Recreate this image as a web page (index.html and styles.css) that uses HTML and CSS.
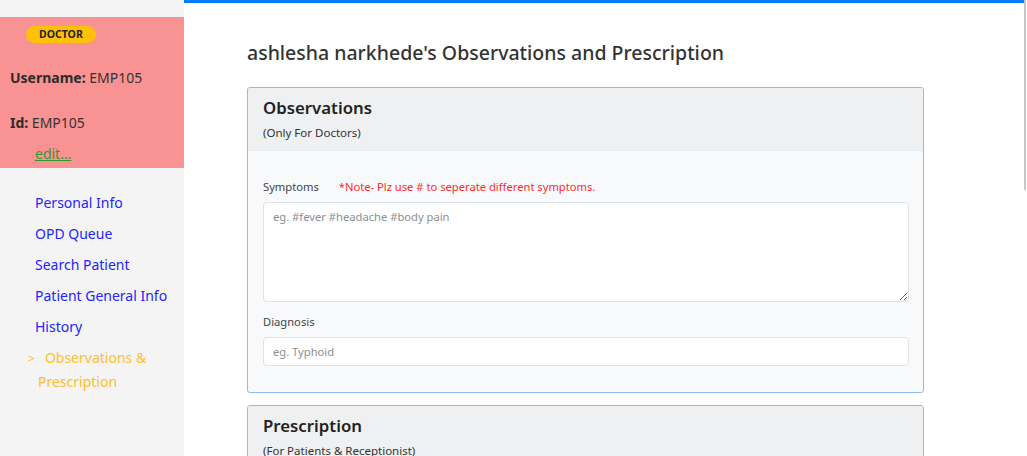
FILE: index.html
```html
<!DOCTYPE html>
<html>
<head>
<meta charset="utf-8">
<link rel="stylesheet" href="styles.css">
</head>
<body>
<div class="layout">
  <aside class="sidebar">
    <div class="profile">
      <span class="badge">DOCTOR</span>
      <p class="info"><b>Username:</b> EMP105</p>
      <p class="info"><b>Id:</b> EMP105</p>
      <a class="edit" href="#">edit...</a>
    </div>
    <nav class="nav">
      <a href="#">Personal Info</a>
      <a href="#">OPD Queue</a>
      <a href="#">Search Patient</a>
      <a href="#">Patient General Info</a>
      <a href="#">History</a>
      <a href="#" class="active"><span class="caret">&gt;</span>Observations &amp; Prescription</a>
    </nav>
  </aside>
  <main class="main">
    <h1 class="title">ashlesha narkhede's Observations and Prescription</h1>
    <section class="card">
      <div class="card-header">
        <h2>Observations</h2>
        <small>(Only For Doctors)</small>
      </div>
      <div class="card-body">
        <div class="field">
          <label>Symptoms <span class="note">*Note- Plz use # to seperate different symptoms.</span></label>
          <textarea placeholder="eg. #fever #headache #body pain"></textarea>
        </div>
        <div class="field">
          <label>Diagnosis</label>
          <input type="text" placeholder="eg. Typhoid">
        </div>
      </div>
    </section>
    <section class="card">
      <div class="card-header">
        <h2>Prescription</h2>
        <small>(For Patients &amp; Receptionist)</small>
      </div>
      <div class="card-body tall"></div>
    </section>
  </main>
</div>
<div class="scroll-thumb"></div>
</body>
</html>
```
FILE: styles.css
```css
* { box-sizing: border-box; }
html, body { margin: 0; padding: 0; overflow: hidden; }
body {
  font-family: "Noto Sans", "Open Sans", sans-serif;
  color: #212529;
  background: #fff;
  width: 1027px;
  height: 456px;
}
.layout { display: flex; height: 456px; }
.sidebar {
  width: 184px;
  flex: none;
  background: #f4f4f4;
  padding-top: 17px;
}
.profile {
  background: #f99393;
  height: 151px;
  padding: 9px 0 0 10px;
  display: flex;
  flex-direction: column;
  align-items: flex-start;
}
.badge {
  margin-left: 16px;
  background: #ffc107;
  color: #212529;
  font-weight: 700;
  font-size: 10.5px;
  line-height: 17px;
  height: 17px;
  padding: 0 13px;
  border-radius: 9px;
}
.info {
  margin: 0;
  font-size: 14px;
  color: #333;
  line-height: 20px;
}
.info:nth-of-type(1) { margin-top: 25px; }
.info:nth-of-type(2) { margin-top: 25px; }
.info b { color: #2b2b2b; }
.edit {
  margin: 11px 0 0 25px;
  font-size: 14px;
  color: #2e9a2e;
  line-height: 20px;
}
.nav {
  display: flex;
  flex-direction: column;
  padding: 25px 0 0 35px;
  width: 170px;
}
.nav a {
  color: #2323ff;
  text-decoration: none;
  font-size: 14px;
  line-height: 20px;
  margin-bottom: 11px;
}
.nav a.active {
  color: #fbc02d;
  margin-left: 3px;
  text-indent: -10px;
  line-height: 23px;
  margin-top: -2px;
  padding-right: 20px;
}
.nav a.active .caret { font-size: 12px; margin-right: 10px; }
.main {
  flex: 1;
  border-top: 3px solid #007bff;
  margin-right: 3px;
  padding: 38px 0 0 63px;
}
.title {
  margin: 0 0 22px;
  font-size: 19.5px;
  font-weight: 500;
  color: #333;
  line-height: 24px;
}
.card {
  width: 677px;
  border: 1px solid #8dbbf2;
  border-radius: 3px;
  background: #f8f9fa;
  margin-bottom: 12px;
  overflow: hidden;
}
.card-header {
  background: #eef0f2;
  height: 63px;
  padding: 7px 15px 0;
  border-bottom: 1px solid #e9ecef;
}
.card-header h2 {
  margin: 0;
  font-size: 16.8px;
  font-weight: 600;
  color: #222;
  line-height: 26px;
}
.card-header small {
  display: block;
  margin-top: 4px;
  font-size: 11.5px;
  color: #333;
  line-height: 16px;
}
.card-body { padding: 28px 15px 26px; }
.card-body.tall { height: 200px; }
.field { display: flex; flex-direction: column; }
.field + .field { margin-top: 12px; }
.field label {
  font-size: 11.2px;
  color: #444;
  line-height: 16px;
  margin-bottom: 7px;
}
.note { color: #ff2b2b; margin-left: 17px; }
textarea, input {
  font-family: inherit;
  font-size: 11.2px;
  color: #495057;
  background: #fff;
  border: 1px solid #dfe2e5;
  border-radius: 4px;
  padding: 5px 9px;
  width: 646px;
}
textarea { height: 100px; resize: vertical; line-height: 18px; }
input { height: 29px; }
::placeholder { color: #8a8f94; }
.scroll-thumb {
  position: fixed;
  top: 0;
  right: 1px;
  width: 2px;
  height: 190px;
  background: #c8c8c8;
}
```
